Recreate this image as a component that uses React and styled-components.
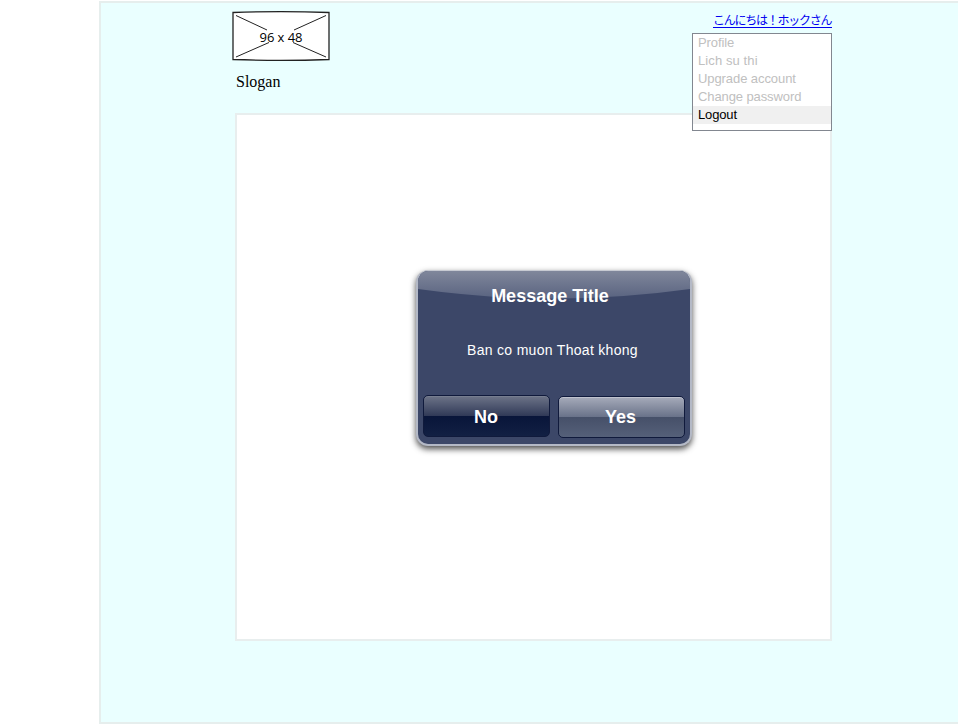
import React from "react";
import styled, { createGlobalStyle } from "styled-components";

const GlobalStyle = createGlobalStyle`
  * { box-sizing: border-box; }
  html, body { margin: 0; background: #fff; overflow: hidden; }
`;

const Page = styled.main`
  height: 723px;
  margin: 1px 0 0 99px;
  padding: 8px 0 0 134px;
  border: 2px solid #e6eeed;
  border-right: 0;
  background: #eaffff;
  overflow: hidden;
`;

const Content = styled.div`
  position: relative;
  width: 597px;
`;

const Header = styled.header`
  display: flex;
  justify-content: space-between;
  height: 102px;
`;

const Brand = styled.div`
  display: flex;
  flex-direction: column;
  margin-left: -3px;
`;

const LogoImage = styled.svg`
  display: block;
  width: 98px;
  height: 50px;
`;

const Slogan = styled.div`
  margin: 12px 0 0 4px;
  font: 16px/18px "Liberation Serif", serif;
  color: #000;
`;

const Greeting = styled.a`
  height: 16px;
  width: 119px;
  margin-top: 1px;
  font: 12px/16px "Noto Sans CJK JP", sans-serif;
  letter-spacing: -1.25px;
  white-space: nowrap;
  color: #0000f0;
  border-bottom: 1px solid #0000f0;
`;

const Panel = styled.section`
  display: flex;
  justify-content: center;
  height: 528px;
  padding: 155px 0 0 40px;
  border: 2px solid #e8eeee;
  background: #fff;
`;

const Menu = styled.ul`
  position: absolute;
  top: 22px;
  right: 0;
  width: 140px;
  height: 98px;
  margin: 0;
  padding: 0;
  list-style: none;
  background: #fff;
  border: 1px solid #828790;
`;

const MenuItem = styled.li`
  height: 18px;
  padding-left: 5px;
  font: 13px/18px "Liberation Sans", Arial, sans-serif;
  letter-spacing: ${(p) => p.$spacing || 0}px;
  color: ${(p) => (p.$active ? "#000" : "#c0c0c0")};
  background: ${(p) => (p.$active ? "#f0f0f0" : "transparent")};
`;

const Dialog = styled.div`
  position: relative;
  display: flex;
  flex-direction: column;
  width: 276px;
  height: 176px;
  border: 2px solid #b4b9c6;
  border-top: 1px solid #c7cad2;
  border-radius: 12px;
  background: #3c4768;
  color: #fff;
  font-family: "Liberation Sans", Arial, sans-serif;
  text-align: center;
  box-shadow: 0 3px 6px rgba(0, 0, 0, 0.7);
  overflow: hidden;
`;

const Gloss = styled.svg`
  position: absolute;
  top: 0;
  left: 0;
  width: 100%;
  height: 29px;
`;

const Title = styled.h1`
  position: relative;
  margin: 14px 7px 0 0;
  font-size: 18px;
  line-height: 22px;
  font-weight: 700;
`;

const Message = styled.p`
  margin: 33px 2px 0 0;
  font-size: 14px;
  line-height: 20px;
  letter-spacing: 0.3px;
`;

const Actions = styled.div`
  display: flex;
  gap: 8px;
  margin: 35px 0 0 5px;
`;

const Button = styled.button`
  width: 127px;
  height: 42px;
  margin: ${(p) => (p.$primary ? "0" : "1px 0 0")};
  padding: ${(p) => (p.$primary ? "2px 0 0" : "0 1px 0 0")};
  border: 1px solid #101a3c;
  border-radius: 5px;
  color: #fff;
  font: bold 18px/38px "Liberation Sans", Arial, sans-serif;
  background: ${(p) =>
    p.$primary
      ? "linear-gradient(#6d7488 0%, #303957 50%, #09153a 51%, #122043 100%)"
      : "linear-gradient(#a6abba 0%, #697289 50%, #465069 51%, #556079 100%)"};
  box-shadow: inset 0 1px 0 rgba(255, 255, 255, ${(p) => (p.$primary ? 0.08 : 0.3)});
`;

const items = [
  { label: "Profile", spacing: -0.1 },
  { label: "Lich su thi", spacing: 0.1 },
  { label: "Upgrade account", spacing: -0.08 },
  { label: "Change password", spacing: -0.1 },
  { label: "Logout", active: true, spacing: -0.15 },
];

function Placeholder() {
  return (
    <LogoImage viewBox="0 0 98 50">
      <path d="M1 1.5Q49-.2 97 1.5V48.5Q49 50.2 1 48.5Z" fill="#fff" stroke="#222" strokeWidth="1.3" />
      <path d="M4 4.5L35 19M4 46L37 31.5M94 4.5L62 19M94 46L61 31.5" stroke="#222" strokeWidth="1" />
      <text x="49" y="31" textAnchor="middle" fontFamily="Open Sans, sans-serif" fontSize="13" textLength="43">
        96 x 48
      </text>
    </LogoImage>
  );
}

export default function App() {
  return (
    <>
      <GlobalStyle />
      <Page>
        <Content>
          <Header>
            <Brand>
              <Placeholder />
              <Slogan>Slogan</Slogan>
            </Brand>
            <Greeting>こんにちは！ホックさん</Greeting>
          </Header>
          <Panel>
            <Dialog role="dialog">
              <Gloss viewBox="0 0 271 29" preserveAspectRatio="none">
                <defs>
                  <linearGradient id="gloss" x1="0" y1="0" x2="0" y2="1">
                    <stop offset="0" stopColor="#80879b" />
                    <stop offset="1" stopColor="#596380" />
                  </linearGradient>
                </defs>
                <path d="M0 0H271V18Q136 37 0 18Z" fill="url(#gloss)" />
              </Gloss>
              <Title>Message Title</Title>
              <Message>Ban co muon Thoat khong</Message>
              <Actions>
                <Button $primary>No</Button>
                <Button>Yes</Button>
              </Actions>
            </Dialog>
          </Panel>
          <Menu>
            {items.map((item) => (
              <MenuItem key={item.label} $active={item.active} $spacing={item.spacing}>
                {item.label}
              </MenuItem>
            ))}
          </Menu>
        </Content>
      </Page>
    </>
  );
}
